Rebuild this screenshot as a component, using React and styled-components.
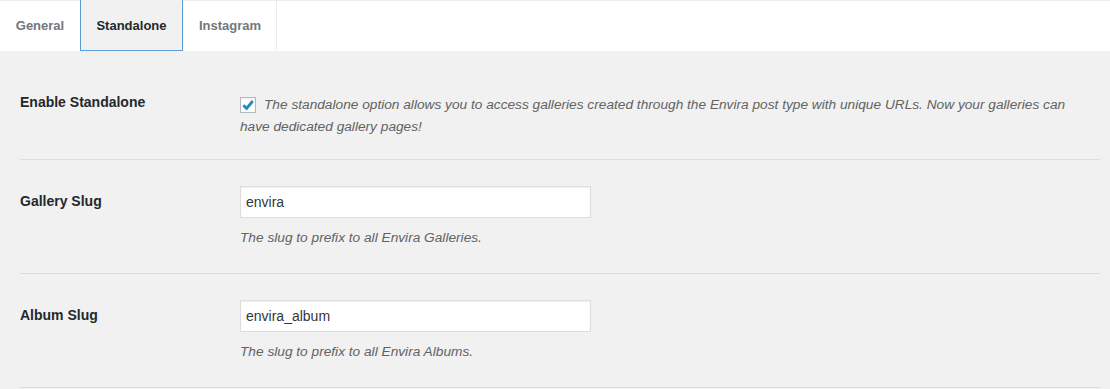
import React from 'react';
import styled, { createGlobalStyle } from 'styled-components';

const GlobalStyle = createGlobalStyle`
  html, body {
    margin: 0;
    padding: 0;
    background: #f1f1f1;
  }
  body {
    font-family: "Liberation Sans", Arial, sans-serif;
    color: #444;
  }
`;

const TabBar = styled.nav`
  display: flex;
  height: 51px;
  background: #fff;
  border-top: 1px solid #ececec;
  box-sizing: border-box;
`;

const Tab = styled.a`
  display: flex;
  align-items: center;
  justify-content: center;
  width: ${(p) => p.w}px;
  box-sizing: border-box;
  font-size: 13px;
  font-weight: bold;
  text-decoration: none;
  color: ${(p) => (p.active ? '#23282d' : '#72777c')};
  background: ${(p) => (p.active ? '#f1f1f1' : '#fff')};
  border: 1px solid ${(p) => (p.active ? '#5b9dd9' : 'transparent')};
  border-top: none;
  margin-top: ${(p) => (p.active ? '-1px' : '0')};
  border-right-color: ${(p) => (p.active ? '#5b9dd9' : p.last ? '#ececec' : 'transparent')};
`;

const Panel = styled.div`
  padding: 17px 10px 0 20px;
`;

const Row = styled.div`
  display: grid;
  grid-template-columns: 220px 1fr;
  padding: 26px 0 ${(p) => p.bottom}px;
  border-bottom: 1px solid #dcdcdc;
`;

const Label = styled.div`
  font-size: 14px;
  font-weight: bold;
  line-height: 20px;
  color: #23282d;
  padding-top: ${(p) => p.offset || 0}px;
  margin-top: ${(p) => p.lift || 0}px;
`;

const Field = styled.div`
  display: flex;
  flex-direction: column;
  padding-right: 20px;
`;

const CheckLine = styled.p`
  margin: 0;
  font-size: 13.7px;
  line-height: 22px;
  font-style: italic;
  color: #626262;
  max-width: 830px;
`;

const Box = styled.span`
  display: inline-flex;
  align-items: center;
  justify-content: center;
  width: 16px;
  height: 16px;
  box-sizing: border-box;
  border: 1px solid #b4b9be;
  background: #fff;
  vertical-align: -3px;
  margin-right: 8px;
  box-shadow: inset 0 1px 2px rgba(0, 0, 0, 0.07);
`;

const TextInput = styled.input`
  width: 351px;
  height: 32px;
  box-sizing: border-box;
  border: 1px solid #ddd;
  background: #fff;
  padding: 0 5px;
  font-family: "Liberation Sans", Arial, sans-serif;
  font-size: 14px;
  color: #32373c;
  box-shadow: inset 0 1px 2px rgba(0, 0, 0, 0.07);
  outline: none;
`;

const Help = styled.p`
  margin: 10px 0 0;
  font-size: 13.7px;
  line-height: 20px;
  font-style: italic;
  color: #626262;
`;

const Check = () => (
  <svg width="14" height="14" viewBox="0 0 14 14">
    <path d="M2.3 7.2 L5.6 10.4 L11.8 3" fill="none" stroke="#1e8cbe" strokeWidth="2.8" />
  </svg>
);

export default function App() {
  return (
    <>
      <GlobalStyle />
      <TabBar>
        <Tab w={80}>General</Tab>
        <Tab w={103} active>Standalone</Tab>
        <Tab w={94} last>Instagram</Tab>
      </TabBar>
      <Panel>
        <Row bottom={21}>
          <Label lift={-2}>Enable Standalone</Label>
          <Field>
            <CheckLine>
              <Box><Check /></Box>
              The standalone option allows you to access galleries created through the Envira post type with unique URLs. Now your galleries can have dedicated gallery pages!
            </CheckLine>
          </Field>
        </Row>
        <Row bottom={25}>
          <Label offset={5}>Gallery Slug</Label>
          <Field>
            <TextInput defaultValue="envira" />
            <Help>The slug to prefix to all Envira Galleries.</Help>
          </Field>
        </Row>
        <Row bottom={25}>
          <Label offset={5}>Album Slug</Label>
          <Field>
            <TextInput defaultValue="envira_album" />
            <Help>The slug to prefix to all Envira Albums.</Help>
          </Field>
        </Row>
      </Panel>
    </>
  );
}
